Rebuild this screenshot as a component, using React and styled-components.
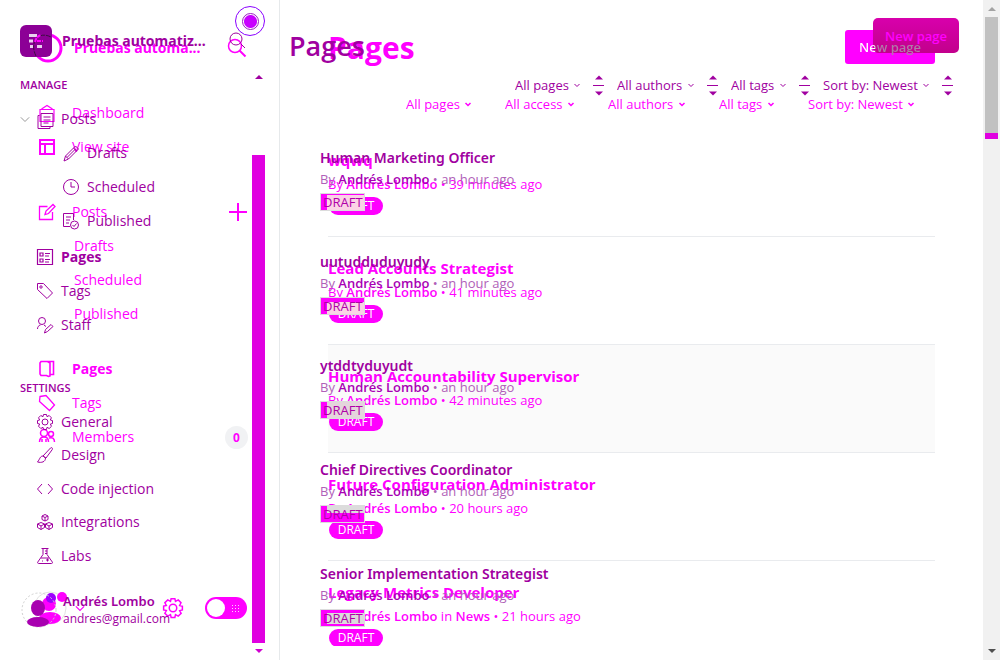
import React from "react";
import styled, { createGlobalStyle, css } from "styled-components";

const BASE = "#a000a0";
const NEXT = "#ff00ff";

const GlobalStyle = createGlobalStyle`
  *, *::before, *::after { box-sizing: border-box; }
  body { margin: 0; background: #fff; }
  body, button, select, input { font-family: "Open Sans", "Noto Sans", sans-serif; }
  h1, h2, h3, p, ul { margin: 0; padding: 0; }
  ul { list-style: none; }
`;

/* ---------- shell ---------- */
const Shell = styled.div`
  display: grid;
  grid-template-columns: 280px minmax(0, 1fr) 17px;
  height: 100vh;
  overflow: hidden;
`;
const Sidebar = styled.aside`
  display: grid;
  grid-template-columns: minmax(0, 1fr) 13px 14px;
  grid-template-rows: minmax(0, 1fr);
  border-right: 1px solid #e6e9eb;
  min-height: 0;
`;
const Stage = styled.main`
  display: grid;
  grid-template-columns: minmax(0, 1fr);
  grid-template-rows: minmax(0, 1fr);
  min-height: 0;
`;
const layer = css`
  grid-column: 1;
  grid-row: 1;
  min-height: 0;
  overflow: hidden;
  color: ${(p) => (p.$next ? NEXT : BASE)};
`;

/* ---------- icons ---------- */
const Svg = styled.svg`
  display: block;
  flex: none;
  overflow: visible;
  fill: none;
  stroke: currentColor;
  stroke-width: ${(p) => p.$w || 1};
`;
const paths = {
  posts: <path d="M4 2.500h12v13H4zM2.500 4.500H1v13h12v-2M6.500 6h7M6.500 9h7M6.500 12h5" />,
  pencil: <path d="M1 16l1.500-5L12.500 1l3 3L5.500 14zM2.500 11l3 3M10.500 3l3 3M4 12.500l8.500-8.500" />,
  clock: <><circle cx="8" cy="8" r="7.500" /><path d="M8 3v5h4" /></>,
  published: <><path d="M7 13.500H.5V.5h10V7M3 4h5M3 7h4M3 10h3" /><circle cx="11.500" cy="12" r="4" /><path d="M9.500 12l1.500 1.500 2.500-3" /></>,
  layout: <path d="M.5.5h15v15H.5zM3 4h3v3H3zM3 10h3v3H3zM8 4.500h5M8 7h4M8 10.500h5M8 13h4" />,
  tag: <><path d="M.5.500h6L15.500 10l-5.500 5.500L.5 6.500z" /><circle cx="4" cy="4" r="1.200" /></>,
  tagPlain: <path d="M1 1.500L7 .5 15.500 10l-5 5.500L.5 6.500z" />,
  staff: <><circle cx="5" cy="4" r="3.500" /><path d="M.5 12c0-2 1-3.500 3-4M7 8l2 1.500M7.500 16l1-3.500 5.500-5 2 2-5.500 5z" /></>,
  gear: <><circle cx="8" cy="8" r="3" /><path d="M6.500.5h3l.5 2.200 2.200-1.200 2.200 2.300L13.300 6l2.200.6v2.900l-2.200.6 1.200 2.200-2.300 2.200-2.200-1.200-.5 2.200h-3L6 13.300l-2.200 1.200-2.300-2.300L2.700 10 .5 9.500v-3L2.700 6 1.500 3.800l2.300-2.300L6 2.700z" /></>,
  brush: <path d="M6 9L13.500 1c1-1 2.500 0 1.800 1.500L9 11zM6 9c-3 0-3 3-5.500 6 4 1 8 0 8-4z" />,
  code: <path d="M5 3L.5 8 5 13M11 3l4.500 5L11 13" />,
  blocks: <><path d="M8 .5l3 1.500v3.500L8 7 5 5.500V2zM5 2l3 1.500L11 2M8 3.500V7" /><path d="M4 8.500l3.500 1.500v3.500L4 15.500.5 13.500V10zM.5 10L4 12l3.500-2M4 12v3.500M12 8.500l3.500 1.500v3.500L12 15.500 8.500 13.500V10zM8.500 10l3.500 2 3.500-2M12 12v3.500" /></>,
  flask: <path d="M4.500.5h7M6 .5v6L.8 14c-.5 1 0 1.500 1 1.500h12.500c1 0 1.500-.5 1-1.500L10 6.500v-6M8 3h2M8 5.500h2M4 10h8M5 13h1M9 12h3M10.500 10.500v3" />,
  house: <path d="M2.500 4L8 .5 13.500 4M1 4.500h14v12H1z" />,
  browser: <path d="M1 1h14v14H1zM1 5h14M6 5v10" />,
  edit: <path d="M8.500 2.500H.5v13h13V8M6 10.500L7 7l7-6.500 2 2L9.500 9.500z" />,
  book: <path d="M1 2l1-1.500h6.500L11 2v13l-1.500.5-2-1H2L1 13zM8 .5h6.500v13H11" />,
  members: <><circle cx="5" cy="4" r="3.500" /><circle cx="12" cy="5" r="2.500" /><path d="M.5 13c0-3 1.500-5 4.500-5s4.500 2 4.500 5M10 9c3-1 5.500 0 5.500 4M3 10v3M7 10v3" /></>,
};
const Icon = ({ name, size = 16, w }) => (
  <Svg $w={w} width={size} height={size} viewBox="0 0 16 16" aria-hidden="true">{paths[name]}</Svg>
);
const Chevron = ({ size = 6, w, color }) => (
  <Svg $w={w} width={size} height={size} viewBox="0 0 6 6" color={color} aria-hidden="true">
    <path d="M.5 2l2.500 2.500L5.500 2" />
  </Svg>
);

/* ---------- sidebar ---------- */
const NavLayer = styled.nav`
  ${layer}
  display: flex;
  flex-direction: column;
  padding: ${(p) => (p.$next ? "32px 4px 30px 32px" : "25px 4px 32px 20px")};
`;
const Brand = styled.header`
  display: flex;
  align-items: center;
  gap: 10px;
  height: 32px;
  flex: none;
`;
const SiteName = styled.h2`
  flex: 1;
  font-family: "Noto Sans", sans-serif;
  font-size: 14px;
  line-height: 20px;
  font-weight: 700;
  white-space: nowrap;
`;
const IconButton = styled.button`
  display: grid;
  place-items: center;
  border: 0;
  padding: 0;
  background: none;
  color: inherit;
`;
const SectionTitle = styled.h3`
  flex: none;
  font-size: 11px;
  line-height: 20px;
  font-weight: 600;
  margin: ${(p) => p.$top}px 0 7px;
`;
const NavList = styled.ul`
  flex: none;
  margin-top: ${(p) => p.$top || 0}px;
`;
const NavRow = styled.li`
  display: flex;
  align-items: center;
  height: ${(p) => (p.$tight ? 33 : 34)}px;
  padding-left: ${(p) => p.$indent}px;
`;
const NavLink = styled.a`
  display: flex;
  flex: 1;
  align-items: center;
  gap: ${(p) => p.$gap || 8}px;
  color: inherit;
  text-decoration: none;
  font-size: 14px;
  line-height: 20px;
  font-weight: ${(p) => (p.$active ? 700 : 400)};
`;
const Disclosure = styled(IconButton)`
  width: 10px;
  height: 16px;
  margin: 0 7px 0 0;
`;
const Count = styled.span`
  display: grid;
  place-items: center;
  width: 23px;
  height: 23px;
  border-radius: 50%;
  background: #f1f2f4;
  font-size: 12px;
  font-weight: 700;
`;
const Account = styled.footer`
  display: flex;
  align-items: center;
  margin-top: auto;
  height: ${(p) => (p.$next ? 44 : 36)}px;
  flex: none;
`;
const Person = styled.div`
  margin-left: 3px;
  font-size: 12px;
  line-height: 18px;
  white-space: nowrap;
`;
const PersonName = styled.p`
  font-family: "Noto Sans", sans-serif;
  font-size: 13px;
  font-weight: 600;
`;
const AccountMenu = styled(IconButton)`
  width: 12px;
  height: 16px;
  margin-left: 6px;
`;
const SettingsButton = styled(IconButton)`
  margin-left: 77px;
`;
const Toggle = styled.input`
  appearance: none;
  display: flex;
  align-items: center;
  width: 42px;
  height: 22px;
  margin: 0 1px 0 auto;
  padding: 0 2px;
  border-radius: 11px;
  background: ${NEXT};
  &::before {
    content: "";
    width: 18px;
    height: 18px;
    border-radius: 50%;
    background: linear-gradient(45deg, #fff 47%, #c000c0 48%, #c000c0 52%, #fff 53%) 9px 9px / 6px 6px no-repeat, #fff;
    background: #fff;
  }
  &::after {
    content: "";
    width: 9px;
    height: 9px;
    margin-left: 6px;
    background: radial-gradient(circle, #ffd0ff 30%, transparent 32%) 0 0 / 3px 3px;
  }
`;
const PointerRing = styled.span`
  position: absolute;
  top: 6px;
  left: 235px;
  width: 30px;
  height: 30px;
  border-radius: 50%;
  border: 1px solid #8a00ff;
  display: grid;
  place-items: center;
  &::before {
    content: "";
    width: 17px;
    height: 17px;
    border-radius: 50%;
    border: 1px solid #9a20c0;
    background: radial-gradient(circle, #c800ff 6px, #fff 7px);
  }
`;
const NavScroll = styled.div`
  grid-column: 2;
  grid-row: 1;
  display: flex;
  flex-direction: column;
  align-items: center;
  padding: 75px 0 7px;
  min-height: 0;
`;
const NavThumb = styled.div`
  flex: 1;
  align-self: stretch;
  margin: 76px 0 6px;
  background: #e000e0;
`;
const Arrow = styled.span`
  width: 0;
  height: 0;
  border: 4px solid transparent;
  border-${(p) => (p.$down ? "top" : "bottom")}-color: ${(p) => p.$color || BASE};
  border-${(p) => (p.$down ? "bottom" : "top")}-width: 0;
`;

/* ---------- content ---------- */
const PageLayer = styled.section`
  ${layer}
  padding: ${(p) => (p.$next ? "30px 48px 0" : "18px 24px 0 9px")};
  margin-bottom: ${(p) => (p.$next ? 14 : 0)}px;
`;
const PageHeader = styled.header`
  display: flex;
  justify-content: space-between;
  align-items: flex-start;
  height: ${(p) => (p.$next ? 64 : 57)}px;
`;
const PageTitle = styled.h1`
  font-size: ${(p) => (p.$next ? 30 : 27)}px;
  line-height: 36px;
  font-weight: ${(p) => (p.$next ? 700 : 600)};
  padding-top: ${(p) => (p.$next ? 0 : 10)}px;
`;
const NewPage = styled.button`
  border: 0;
  white-space: nowrap;
  font-size: 13px;
  line-height: 20px;
  height: 35px;
  padding: 0 12px;
  font-weight: 600;
  color: ${NEXT};
  border-radius: 5px;
  background: linear-gradient(#d800ac, #c2008c);
`;
const NewPageNext = styled(NewPage)`
  height: 34px;
  padding: 0 14px;
  border-radius: 3px;
  background: ${NEXT};
`;
/* The label stays visible where the other layer's button covers this one. */
const NewPageLabel = styled.span`
  position: relative;
  z-index: 1;
  color: transparent;
  background: linear-gradient(90deg, #fff 16px, #b07aa8 16px);
  background-clip: text;
`;
const Filters = styled.div`
  display: flex;
  justify-content: flex-end;
  align-items: center;
  height: 20px;
  gap: ${(p) => (p.$next ? 34 : 13)}px;
  padding-right: ${(p) => (p.$next ? 21 : 6)}px;
`;
const FilterLabel = styled.label`
  display: flex;
  align-items: center;
  gap: 5px;
`;
const Select = styled.select`
  appearance: none;
  border: 0;
  padding: 0;
  background: none;
  color: inherit;
  font-size: 13px;
  line-height: 20px;
`;
const Stepper = styled.span`
  display: block;
  margin-left: 8px;
`;
const PostList = styled.ul`
  margin-top: ${(p) => (p.$next ? 15 : 52)}px;
  padding-left: ${(p) => (p.$next ? 0 : 31)}px;
`;
const PostRow = styled.li`
  padding: ${(p) => (p.$next ? "19px 0 21px" : "0 0 40px")};
  border-bottom: ${(p) => (p.$next ? "1px solid #e9ebee" : "0")};
  background: ${(p) => (p.$hover ? "#fafafa" : "none")};
`;
const PostTitle = styled.h3`
  font-family: ${(p) => (p.$next ? "inherit" : '"Noto Sans", sans-serif')};
  font-size: ${(p) => (p.$next ? 15 : 14)}px;
  line-height: ${(p) => (p.$next ? 24 : 22)}px;
  font-weight: ${(p) => (p.$next ? 700 : 600)};
`;
const Meta = styled.p`
  font-size: 13px;
  line-height: ${(p) => (p.$next ? 24 : 20)}px;
  color: ${(p) => (p.$next ? NEXT : "#b060b8")};
  b { font-weight: 600; color: ${(p) => (p.$next ? NEXT : "#a800b4")}; }
`;
const Badge = styled.span`
  display: block;
  width: 45px;
  height: 18px;
  margin: 4px 0 0;
  padding-left: 3px;
  font-size: 13px;
  line-height: 18px;
  outline: 1px solid #dcdcdc;
  outline-offset: -1px;
  color: #b000a8;
  background:
    linear-gradient(${(p) => p.$fill}, ${(p) => p.$fill}) 7px ${(p) => p.$band}px / 37px ${(p) => p.$depth}px no-repeat,
    ${NEXT};
`;
const Pill = styled.span`
  display: block;
  width: 54px;
  height: 18px;
  margin: 1px 0 0 1px;
  border-radius: 9px;
  font-size: 12px;
  line-height: 18px;
  text-align: center;
  color: #fff;
  background: ${NEXT};
`;

/* ---------- window scroll bar ---------- */
const WindowScroll = styled.div`
  display: flex;
  flex-direction: column;
  align-items: center;
  padding: 7px 0;
  background: #f1f1f1;
`;
const WindowThumb = styled.div`
  width: 13px;
  height: 122px;
  margin: 6px 0 auto;
  background: linear-gradient(#c1c1c1 116px, #e000e0 116px);
`;

const Filter = ({ text, stepper }) => (
  <FilterLabel>
    <Select aria-label={text} defaultValue={text}><option>{text}</option></Select>
    <Chevron w={stepper ? 1 : 1.5} />
    {stepper && (
      <Stepper>
        <Svg width="11" height="20" viewBox="0 0 11 20" aria-hidden="true">
          <path d="M0 10.500h11" />
          <path d="M2 4.500l4-4 4 4zM2 16.500l4 4 4-4z" fill="currentColor" stroke="none" />
        </Svg>
      </Stepper>
    )}
  </FilterLabel>
);

const Item = ({ icon, text, active, indent, tight, gap, weight, children }) => (
  <NavRow $indent={indent} $tight={tight}>
    <NavLink href="#" $active={active} $gap={gap} aria-current={active ? "page" : undefined}>
      {icon && <Icon name={icon} w={weight} />}
      {text}
    </NavLink>
    {children}
  </NavRow>
);

const BaseNav = () => (
  <NavLayer>
    <Brand>
      <Svg width="32" height="32" viewBox="0 0 32 32" aria-hidden="true">
        <rect width="32" height="32" rx="6" fill="#8c0096" stroke="none" />
        <path d="M9 10.500h8M9 16h4M10 21.500h3M17 21.500h5" stroke="#e8d0ee" strokeWidth="3" />
        <path d="M16 31c-3-6-3-12-1-15M20 11c3-1.500 7-1 11 1" stroke="#3a1040" strokeDasharray="5 1" />
        <path d="M15 17c1-4 3-6 6-7M17 16h6" stroke="#ff00ff" strokeWidth="2" strokeDasharray="4 1" />
      </Svg>
      <SiteName>Pruebas automatiz...</SiteName>
      <IconButton aria-label="Search">
        <Svg width="18" height="20" viewBox="0 0 18 20" aria-hidden="true">
          <circle cx="6" cy="8" r="6" />
          <path d="M11 13l4 4" />
        </Svg>
      </IconButton>
    </Brand>
    <SectionTitle $top={18}>MANAGE</SectionTitle>
    <NavList>
      <NavRow $indent={0}>
        <Disclosure aria-label="Collapse posts"><Chevron size={10} w={0.6} color="#999" /></Disclosure>
        <NavLink href="#"><Icon name="posts" />Posts</NavLink>
      </NavRow>
      <Item icon="pencil" text="Drafts" indent={43} />
      <Item icon="clock" text="Scheduled" indent={43} />
      <Item icon="published" text="Published" indent={43} />
    </NavList>
    <NavList $top={2}>
      <Item icon="layout" text="Pages" active indent={17} weight={1.2} />
      <Item icon="tag" text="Tags" indent={17} />
      <Item icon="staff" text="Staff" indent={17} />
    </NavList>
    <SectionTitle $top={36}>SETTINGS</SectionTitle>
    <NavList>
      <Item icon="gear" text="General" indent={17} tight />
      <Item icon="brush" text="Design" indent={17} />
      <Item icon="code" text="Code injection" indent={17} tight />
      <Item icon="blocks" text="Integrations" indent={17} />
      <Item icon="flask" text="Labs" indent={17} tight />
    </NavList>
    <Account>
      <Svg width="40" height="36" viewBox="0 0 40 36" aria-hidden="true">
        <circle cx="19" cy="18" r="17" stroke="#d0d0d0" strokeDasharray="2 2" />
        <ellipse cx="18" cy="16" rx="7" ry="8" fill="#a800b0" stroke="none" />
        <ellipse cx="18" cy="30" rx="11" ry="5" fill="#a800b0" stroke="none" />
      </Svg>
      <Person>
        <PersonName>Andrés Lombo</PersonName>
        <p>andres@gmail.com</p>
      </Person>
    </Account>
  </NavLayer>
);

const NextNav = () => (
  <NavLayer $next>
    <Brand>
      <Svg width="32" height="32" viewBox="0 0 32 32" aria-hidden="true">
        <circle cx="16" cy="16" r="13" strokeWidth="3" />
      </Svg>
      <SiteName>Pruebas automa...</SiteName>
      <IconButton aria-label="Search">
        <Svg $w={1.5} width="20" height="20" viewBox="0 0 20 20" aria-hidden="true">
          <circle cx="7" cy="8" r="6.500" />
          <path d="M11.500 12.500l6 6" strokeWidth="2" />
        </Svg>
      </IconButton>
    </Brand>
    <NavList $top={32}>
      <Item icon="house" text="Dashboard" indent={7} gap={17} weight={1.2} />
      <Item icon="browser" text="View site" indent={7} gap={17} weight={2} />
    </NavList>
    <NavList $top={31}>
      <Item icon="edit" text="Posts" indent={7} gap={17} weight={1.3}>
        <IconButton aria-label="New post">
          <Svg $w={2} width="20" height="18" viewBox="0 0 20 18" aria-hidden="true">
            <path d="M10 0v18M1 9h18" />
          </Svg>
        </IconButton>
      </Item>
      <Item text="Drafts" indent={42} />
      <Item text="Scheduled" indent={42} />
      <Item text="Published" indent={42} />
    </NavList>
    <NavList $top={21}>
      <Item icon="book" text="Pages" active indent={7} gap={17} weight={1.6} />
      <Item icon="tagPlain" text="Tags" indent={7} gap={17} weight={1.3} />
      <Item icon="members" text="Members" indent={7} gap={17} weight={1.5}><Count>0</Count></Item>
    </NavList>
    <Account $next>
      <Svg width="36" height="44" viewBox="0 0 36 44" aria-hidden="true">
        <circle cx="18" cy="22" r="16" stroke="#e2e2e2" />
        <circle cx="17" cy="18" r="7" fill={NEXT} stroke="none" />
        <ellipse cx="18" cy="32" rx="11" ry="6" fill={NEXT} stroke="none" />
        <circle cx="30" cy="11" r="5" fill={NEXT} stroke="none" />
        <circle cx="19" cy="12" r="5" fill="#9d00ff" stroke="none" />
      </Svg>
      <AccountMenu aria-label="Account menu"><Chevron size={10} w={0.7} /></AccountMenu>
      <SettingsButton aria-label="Settings"><Icon name="gear" size={20} w={1.2} /></SettingsButton>
      <Toggle type="checkbox" aria-label="Night shift" />
    </Account>
  </NavLayer>
);

const basePosts = [
  ["Human Marketing Officer", "#fbd3e6", 2, 15],
  ["uutudduduyudy", "#fbd3e6", 5, 12],
  ["ytddtyduyudt", "#e4d5dc", 1, 16],
  ["Chief Directives Coordinator", "#dcdcdc", 1, 7],
  ["Senior Implementation Strategist", "#dcdcdc", 4, 11],
];
const nextPosts = [
  ["wqwq", "39 minutes ago"],
  ["Lead Accounts Strategist", "41 minutes ago"],
  ["Human Accountability Supervisor", "42 minutes ago"],
  ["Future Configuration Administrator", "20 hours ago"],
  ["Legacy Metrics Developer", "21 hours ago", "News"],
];

export default function App() {
  return (
    <>
      <GlobalStyle />
      <Shell>
        <Sidebar>
          <NextNav />
          <BaseNav />
          <NavScroll>
            <Arrow />
            <NavThumb />
            <Arrow $down $color="#d000d0" />
          </NavScroll>
          <PointerRing />
        </Sidebar>
        <Stage>
          <PageLayer $next>
            <PageHeader $next>
              <PageTitle $next>Pages</PageTitle>
              <NewPageNext><NewPageLabel>New page</NewPageLabel></NewPageNext>
            </PageHeader>
            <Filters $next>
              {["All pages", "All access", "All authors", "All tags", "Sort by: Newest"].map((t) => (
                <Filter key={t} text={t} />
              ))}
            </Filters>
            <PostList $next>
              {nextPosts.map(([title, when, tag], i) => (
                <PostRow key={title} $next $hover={i === 2}>
                  <PostTitle $next>{title}</PostTitle>
                  <Meta $next>By <b>Andrés Lombo</b>{tag && <> in <b>{tag}</b></>} • {when}</Meta>
                  <Pill>DRAFT</Pill>
                </PostRow>
              ))}
            </PostList>
          </PageLayer>
          <PageLayer>
            <PageHeader>
              <PageTitle>Pages</PageTitle>
              <NewPage>New page</NewPage>
            </PageHeader>
            <Filters>
              {["All pages", "All authors", "All tags", "Sort by: Newest"].map((t) => (
                <Filter key={t} text={t} stepper />
              ))}
            </Filters>
            <PostList>
              {basePosts.map(([title, fill, band, depth]) => (
                <PostRow key={title}>
                  <PostTitle>{title}</PostTitle>
                  <Meta>By <b>Andrés Lombo</b> • an hour ago</Meta>
                  <Badge $fill={fill} $band={band} $depth={depth}>DRAFT</Badge>
                </PostRow>
              ))}
            </PostList>
          </PageLayer>
        </Stage>
        <WindowScroll>
          <Arrow $color="#a3a3a3" />
          <WindowThumb />
          <Arrow $down $color="#505050" />
        </WindowScroll>
      </Shell>
    </>
  );
}
